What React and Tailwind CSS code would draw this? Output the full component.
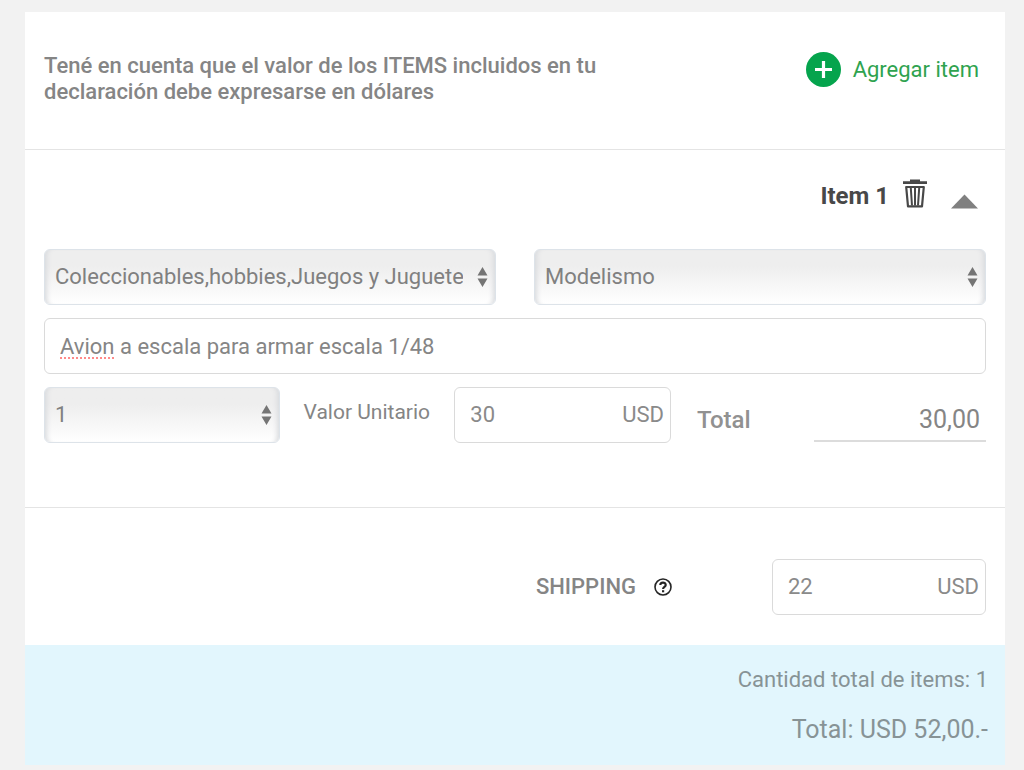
import { useState } from 'react';

const CATEGORIES = ['Coleccionables,hobbies,Juegos y Juguetes', 'Electrónica', 'Indumentaria'];
const SUBCATEGORIES = ['Modelismo', 'Juegos de mesa', 'Figuras'];
const QUANTITIES = ['1', '2', '3', '4', '5'];

function SelectField({ label, options }) {
    return (
        <div className="relative">
            <select
                aria-label={label}
                className="block h-14 w-full appearance-none rounded-md border border-[#dde3e9] bg-linear-to-b from-[#eeeeee] from-30% to-white pr-8 pl-[10px] text-[22px] text-[#808080] shadow-[inset_6px_0_5px_-4px_#d9dbde,inset_-6px_0_5px_-4px_#d9dbde]"
            >
                {options.map((option) => (
                    <option key={option}>{option}</option>
                ))}
            </select>
            <svg
                className="pointer-events-none absolute top-[18px] right-2 h-5 w-[11px] fill-[#757575]"
                viewBox="0 0 11 20"
                aria-hidden="true"
            >
                <path d="M5.500 0L10.500 8.500H0.500ZM0.500 11.500H10.500L5.500 20Z" />
            </svg>
        </div>
    );
}

function MoneyField({ id, value, onChange }) {
    return (
        <div className="flex h-14 items-center rounded-md border border-[#dadada] bg-white pr-[6px] pl-[15px] text-[22px] text-[#8a8a8a]">
            <input
                id={id}
                className="min-w-0 flex-1 bg-transparent outline-none"
                value={value}
                onChange={(e) => onChange(e.target.value)}
            />
            <span>USD</span>
        </div>
    );
}

function TrashIcon() {
    return (
        <svg className="h-[29px] w-6" viewBox="0 0 24 29" fill="none" aria-hidden="true">
            <path d="M7 0.500H17V2.200H24V5H0V2.200H7Z" fill="#484848" />
            <path d="M3.200 8H20.800L19 27.300H5Z" stroke="#484848" strokeWidth="2.200" strokeLinejoin="round" />
            <path d="M7.800 9L9 26.500M12 9V26.500M16.200 9L15 26.500" stroke="#484848" strokeWidth="2" />
        </svg>
    );
}

export default function App() {
    const [description, setDescription] = useState('Avion a escala para armar escala 1/48');
    const [price, setPrice] = useState('30');
    const [shipping, setShipping] = useState('22');

    return (
        <div className="min-h-screen bg-[#f2f2f2] pt-3 pr-[19px] pb-[5px] pl-[25px] font-[Roboto,sans-serif] text-[22px] leading-[26px] text-[#858585]">
            <main className="bg-white">
                {/* Encabezado */}
                <header className="flex items-start justify-between border-b border-[#e4e4e4] pt-10 pr-[26px] pb-11 pl-[19px]">
                    <p className="max-w-[600px] pt-px font-medium">
                        Tené en cuenta que el valor de los ITEMS incluidos en tu declaración debe expresarse en dólares
                    </p>
                    <button type="button" className="flex items-center gap-3 text-[#2fa34f]">
                        <svg className="size-[35px]" viewBox="0 0 35 35" aria-hidden="true">
                            <circle cx="17.500" cy="17.500" r="17.500" fill="#05a44d" />
                            <path d="M17.500 9V26M9 17.500H26" stroke="#fff" strokeWidth="3.200" />
                        </svg>
                        Agregar item
                    </button>
                </header>

                {/* Item */}
                <section className="border-b border-[#e4e4e4] px-[19px] pt-7 pb-16">
                    <div className="mb-10 flex items-center justify-end pr-2 text-[#484848]">
                        <h2 className="mr-[14px] pt-[5px] text-[24px] leading-[26px] font-bold">Item 1</h2>
                        <button type="button" aria-label="Eliminar item" className="mr-6">
                            <TrashIcon />
                        </button>
                        <button type="button" aria-label="Contraer item" className="pt-4">
                            <svg className="h-[15px] w-[27px] fill-[#808080]" viewBox="0 0 27 15" aria-hidden="true">
                                <path d="M13.500 0.500L27 14.500H0Z" />
                            </svg>
                        </button>
                    </div>

                    <div className="grid gap-[13px]">
                        <div className="grid grid-cols-2 gap-[38px]">
                            <SelectField label="Categoría" options={CATEGORIES} />
                            <SelectField label="Subcategoría" options={SUBCATEGORIES} />
                        </div>

                        <div className="relative">
                            <input
                                aria-label="Descripción"
                                spellCheck="false"
                                className="block h-14 w-full rounded-md border border-[#dadada] px-[15px] outline-none"
                                value={description}
                                onChange={(e) => setDescription(e.target.value)}
                            />
                            <span className="pointer-events-none absolute bottom-[15px] left-4 w-[54px] border-b-2 border-dotted border-[#ff8a8a]" />
                        </div>

                        <div className="flex">
                            <div className="w-1/4">
                                <SelectField label="Cantidad" options={QUANTITIES} />
                            </div>
                            <label htmlFor="price" className="ml-6 pt-3 text-[21px]">
                                Valor Unitario
                            </label>
                            <div className="ml-auto w-[23%]">
                                <MoneyField id="price" value={price} onChange={setPrice} />
                            </div>
                            <div className="ml-[26px] flex w-[289px] items-end justify-between text-[25px] leading-7">
                                <span className="pb-[9px] text-[24px] leading-7 font-medium text-[#919191]">Total</span>
                                <output className="mb-px w-[172px] border-b-2 border-[#dcdcdc] pr-[6px] pb-[6px] text-right">
                                    30,00
                                </output>
                            </div>
                        </div>
                    </div>
                </section>

                {/* Envío */}
                <section className="flex items-center justify-end pt-[51px] pr-[19px] pb-[30px]">
                    <label htmlFor="shipping" className="font-medium">
                        SHIPPING
                    </label>
                    <button type="button" aria-label="Ayuda" className="mr-[100px] ml-[18px]">
                        <svg className="size-[18px]" viewBox="0 0 18 18" fill="none" stroke="#252525" aria-hidden="true">
                            <circle cx="9" cy="9" r="8" strokeWidth="1.600" />
                            <path d="M6.300 7.100C6.300 3.700 11.700 3.700 11.700 7C11.700 9 9.100 8.900 9.100 11" strokeWidth="2.200" />
                            <path d="M9.100 12.200V14.300" strokeWidth="2.200" />
                        </svg>
                    </button>
                    <div className="w-[214px]">
                        <MoneyField id="shipping" value={shipping} onChange={setShipping} />
                    </div>
                </section>

                {/* Totales */}
                <footer className="bg-[#e2f6fd] pt-[22px] pr-[17px] pb-[22px] text-right text-[#879396]">
                    <p>Cantidad total de items: 1</p>
                    <p className="mt-6 text-[25px] leading-[26px]">Total: USD 52,00.-</p>
                </footer>
            </main>
        </div>
    );
}
